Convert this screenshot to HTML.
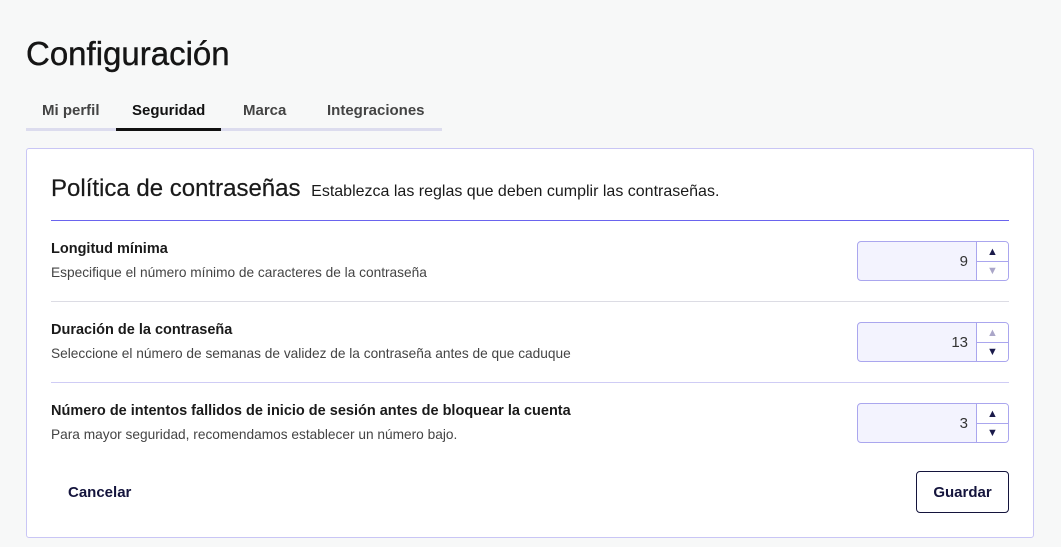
<!DOCTYPE html>
<html><head><meta charset="utf-8"><style>
*{box-sizing:border-box;margin:0;padding:0}
body{width:1061px;height:547px;background:#f7f8f8;font-family:"Liberation Sans",Arial,sans-serif;color:#1a1a1a;position:relative;overflow:hidden}
h1{position:absolute;left:26px;top:35px;font-size:33px;font-weight:400;color:#151515;-webkit-text-stroke:0.4px #151515}
.tabs{position:absolute;left:26px;top:96px;width:416px;height:35px;border-bottom:3px solid #dcdcee}
.tab{position:absolute;top:6px;font-size:15px;font-weight:700;color:#444}
.tab.act{color:#111}
.ul{position:absolute;left:90px;top:32px;width:105px;height:3px;background:#111}
.card{position:absolute;left:26px;top:148px;width:1008px;height:390px;background:#fff;border:1px solid #c9c6f5;border-radius:3px}
.t{position:absolute;left:24px;top:26px;font-size:24px;color:#1a1a1a;-webkit-text-stroke:0.2px #1a1a1a}
.t span{font-size:16px;margin-left:4px;-webkit-text-stroke:0}
.hr{position:absolute;left:24px;width:958px;height:1px}
.lab{position:absolute;left:24px;font-size:14.5px;font-weight:700;color:#1a1a1a}
.desc{position:absolute;left:24px;font-size:13.7px;color:#444}
.inp{position:absolute;left:830px;width:152px;height:40px;border:1px solid #aaa6ee;border-radius:4px;background:#f3f3fe;overflow:hidden}
.inp .v{position:absolute;right:40px;top:11px;font-size:15px;color:#333}
.sp{position:absolute;right:0;top:0;width:32px;height:38px;border-left:1px solid #aaa6ee;background:#fff}
.sp div{height:19px;display:flex;align-items:center;justify-content:center;font-size:11px;color:#1a1a4a}
.sp div+div{border-top:1px solid #aaa6ee}
.sp .dis{color:#aaa6c8}
.btn{position:absolute;font-size:15px;font-weight:700;color:#14143c}
</style></head><body>
<h1>Configuración</h1>
<div class="tabs">
<div class="tab" style="left:16px">Mi perfil</div>
<div class="tab act" style="left:106px">Seguridad</div>
<div class="tab" style="left:217px">Marca</div>
<div class="tab" style="left:301px">Integraciones</div>
<div class="ul"></div>
</div>
<div class="card">
<div class="t">Política de contraseñas <span>Establezca las reglas que deben cumplir las contraseñas.</span></div>
<div class="hr" style="top:71px;background:#6a64ee"></div>
<div class="lab" style="top:92px">Longitud mínima</div>
<div class="desc" style="top:116px">Especifique el número mínimo de caracteres de la contraseña</div>
<div class="inp" style="top:92px"><div class="v">9</div><div class="sp"><div>▲</div><div class="dis">▼</div></div></div>
<div class="hr" style="top:152px;background:#dcdce4"></div>
<div class="lab" style="top:173px">Duración de la contraseña</div>
<div class="desc" style="top:197px">Seleccione el número de semanas de validez de la contraseña antes de que caduque</div>
<div class="inp" style="top:173px"><div class="v">13</div><div class="sp"><div class="dis">▲</div><div>▼</div></div></div>
<div class="hr" style="top:233px;background:#cfccf5"></div>
<div class="lab" style="top:254px">Número de intentos fallidos de inicio de sesión antes de bloquear la cuenta</div>
<div class="desc" style="top:278px">Para mayor seguridad, recomendamos establecer un número bajo.</div>
<div class="inp" style="top:254px"><div class="v">3</div><div class="sp"><div>▲</div><div>▼</div></div></div>
<div class="btn" style="left:41px;top:335px">Cancelar</div>
<div class="btn" style="left:889px;top:322px;width:93px;height:42px;border:1px solid #14143c;border-radius:4px;display:flex;align-items:center;justify-content:center">Guardar</div>
</div>
</body></html>
